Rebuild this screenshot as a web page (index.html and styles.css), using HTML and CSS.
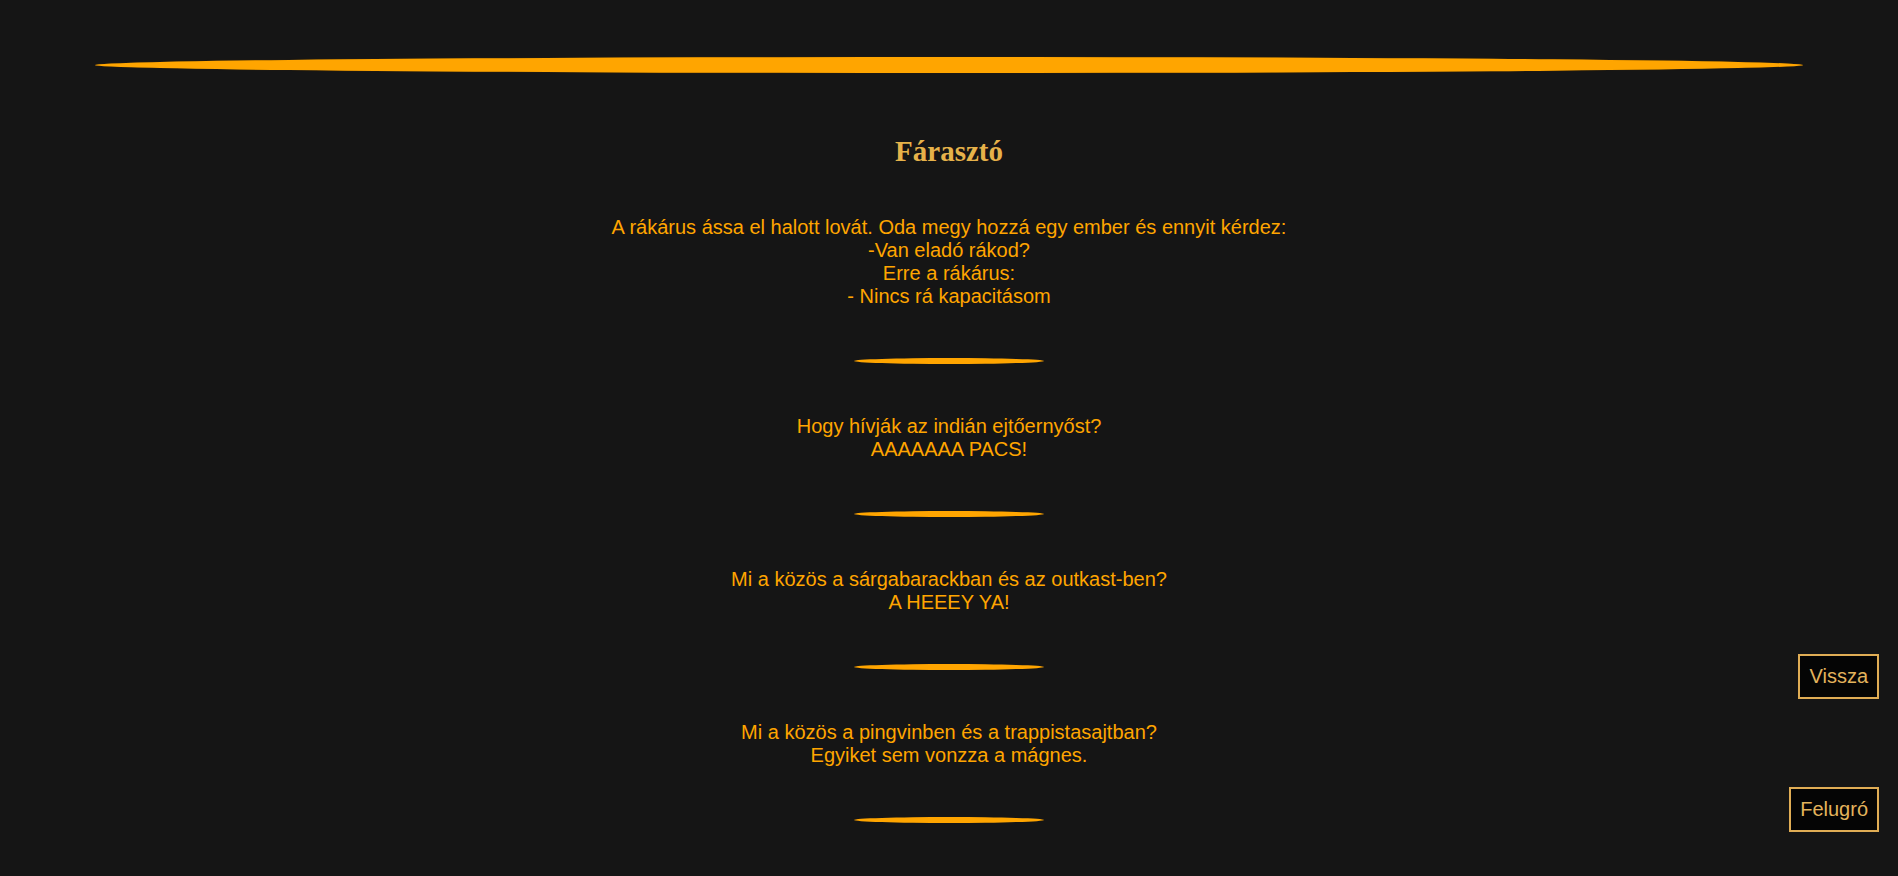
FILE: index.html
```html
<!DOCTYPE html>
<html lang="hu">
<head>
<meta charset="utf-8">
<title>Fárasztó</title>
<link rel="stylesheet" href="styles.css">
</head>
<body>
<div class="page">
  <hr class="bar-big">
  <h2 class="title">Fárasztó</h2>
  <main class="jokes">
    <p class="joke">A rákárus ássa el halott lovát. Oda megy hozzá egy ember és ennyit kérdez:<br>-Van eladó rákod?<br>Erre a rákárus:<br>- Nincs rá kapacitásom</p>
    <hr class="bar-small">
    <p class="joke">Hogy hívják az indián ejtőernyőst?<br>AAAAAAA PACS!</p>
    <hr class="bar-small">
    <p class="joke">Mi a közös a sárgabarackban és az outkast-ben?<br>A HEEEY YA!</p>
    <hr class="bar-small">
    <p class="joke">Mi a közös a pingvinben és a trappistasajtban?<br>Egyiket sem vonzza a mágnes.</p>
    <hr class="bar-small">
    <p class="joke">Hogy hívják a vak kínai bűvészt?<br>Bűvakász.</p>
    <hr class="bar-small">
  </main>
</div>
<a class="fixed-btn btn-back" href="#">Vissza</a>
<a class="fixed-btn btn-top" href="#">Felugró</a>
</body>
</html>
```
FILE: styles.css
```css
html, body {
  margin: 0;
  padding: 0;
  background: #151515;
}
body {
  font-family: "Liberation Sans", Arial, sans-serif;
  font-size: 20px;
  color: #ffa500;
}
.page {
  display: flex;
  flex-direction: column;
  align-items: center;
  padding-top: 57px;
}
.bar-big {
  width: 90%;
  height: 16px;
  margin: 0;
  border: 0;
  border-radius: 50%;
  background: #ffa500;
  box-shadow: 0 0 1px #5a3a00;
}
.title {
  margin: 62px 0 0;
  font-family: "Liberation Serif", "Times New Roman", serif;
  font-size: 29px;
  font-weight: bold;
  line-height: 33px;
  color: #e6b24a;
}
.jokes {
  display: flex;
  flex-direction: column;
  align-items: center;
  width: 100%;
  margin-top: 48px;
}
.joke {
  margin: 0;
  text-align: center;
  line-height: 23px;
}
.bar-small {
  width: 10%;
  height: 6px;
  margin: 50px 0 51px;
  border: 0;
  border-radius: 50%;
  background: #ffa500;
}
.fixed-btn {
  position: fixed;
  right: 19px;
  padding: 9px 9px;
  border: 2px solid #e0ad55;
  background: #050505;
  color: #e3b35c;
  font-size: 20px;
  line-height: 23px;
  text-decoration: none;
}
.btn-back {
  bottom: 177px;
}
.btn-top {
  bottom: 44px;
}
```
